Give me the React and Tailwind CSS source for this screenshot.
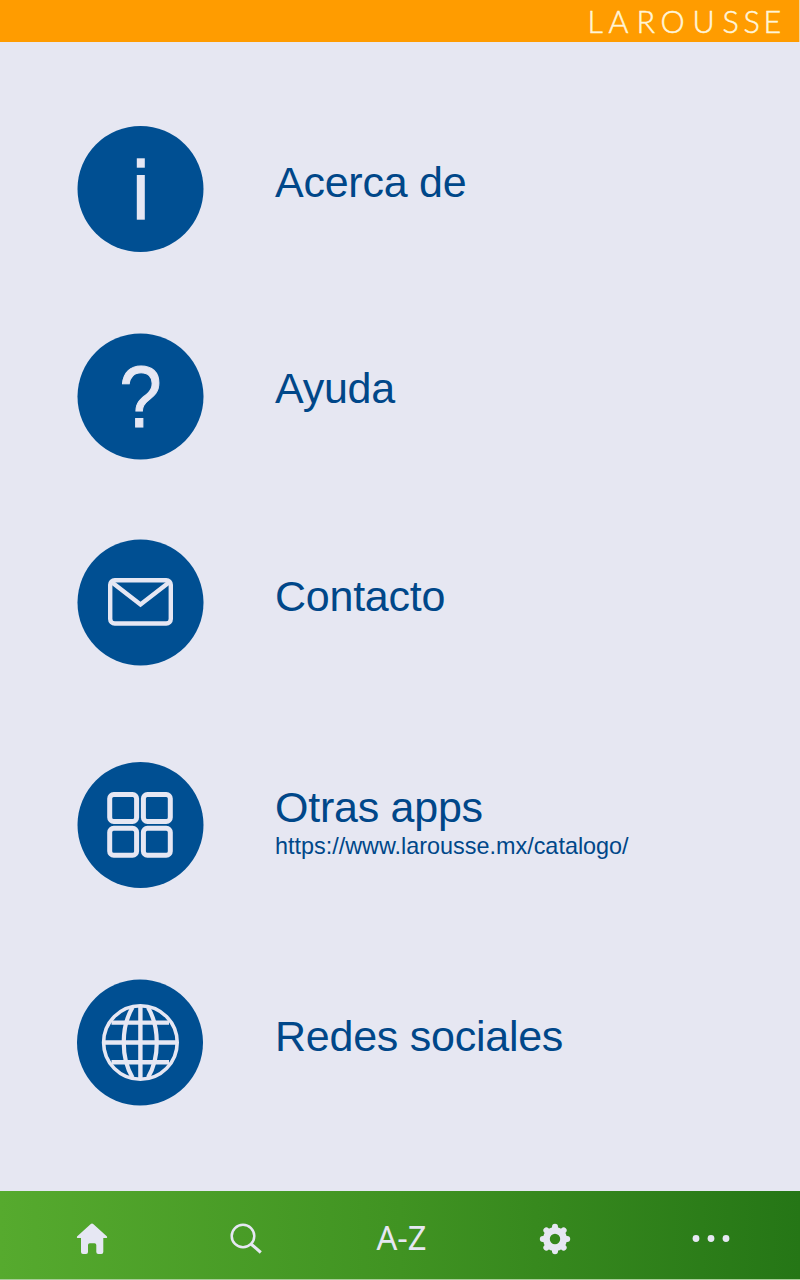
const LABEL_FONT = "font-['Liberation_Sans',Arial,sans-serif]";

function Disc({ cx = 63.5, cy = 63.5, children }) {
  return (
    <svg width="127" height="127" viewBox="0 0 127 127" className="shrink-0 text-[#e6e7f3]" fill="none" stroke="currentColor">
      <circle cx={cx} cy={cy} r="63" fill="#004f92" stroke="none" />
      {children}
    </svg>
  );
}

function InfoIcon() {
  return (
    <Disc cy={63}>
      <g fill="currentColor" stroke="none">
        <rect x="59.8" y="32.3" width="8" height="9.4" />
        <rect x="59.8" y="49" width="8" height="44.7" />
      </g>
    </Disc>
  );
}

function HelpIcon() {
  return (
    <Disc>
      <text x="63.5" y="94.3" textAnchor="middle" fontFamily="Liberation Sans, Arial, sans-serif" fontSize="86.5" textLength="42.5" lengthAdjust="spacingAndGlyphs" fill="currentColor" strokeWidth="1">?</text>
    </Disc>
  );
}

function MailIcon() {
  return (
    <Disc>
      <rect x="33.2" y="41.2" width="60.6" height="43.3" rx="4.5" strokeWidth="4.4" />
      <path d="M34.5 43 L63.5 65.5 L92.5 43" strokeWidth="4.4" />
    </Disc>
  );
}

function AppsIcon() {
  return (
    <Disc cy={63}>
      <g strokeWidth="5">
        <rect x="32.7" y="32.6" width="26.9" height="26.9" rx="4" />
        <rect x="66.4" y="32.6" width="26.9" height="26.9" rx="4" />
        <rect x="32.7" y="66.3" width="26.9" height="26.9" rx="4" />
        <rect x="66.4" y="66.3" width="26.9" height="26.9" rx="4" />
      </g>
    </Disc>
  );
}

function GlobeIcon() {
  return (
    <Disc cx={63}>
      <circle cx="63.4" cy="63.5" r="36.8" strokeWidth="3.6" />
      <path d="M63.4 27 V100 M26.5 63.5 H100 M34.5 43.6 H92 M34.5 83.2 H92" strokeWidth="4.4" />
      <path d="M55.5 28.5 C43.8 48 43.8 79 55.5 98.5 M71 28.5 C82.7 48 82.7 79 71 98.5" strokeWidth="4.2" />
    </Disc>
  );
}

const items = [
  { title: "Acerca de", Icon: InfoIcon, row: "mt-[84px]", label: "pt-[31px]" },
  { title: "Ayuda", Icon: HelpIcon, row: "mt-[80px]", label: "pt-[30px]" },
  { title: "Contacto", Icon: MailIcon, row: "mt-[79px]", label: "pt-[32px]" },
  { title: "Otras apps", Icon: AppsIcon, row: "mt-[96px]", label: "pt-[20px]", link: "https://www.larousse.mx/catalogo/" },
  { title: "Redes sociales", Icon: GlobeIcon, row: "mt-[90px]", label: "pt-[32px]" },
];

function MenuRow({ title, Icon, row, label, link }) {
  return (
    <li className={`flex h-[127px] gap-[71px] pl-[77px] ${row}`}>
      <Icon />
      <div className={`flex flex-col text-[#004789] ${label}`}>
        <span className="text-[43px] leading-[50px] tracking-[-0.25px] whitespace-nowrap">{title}</span>
        {link && <span className="text-[23.4px] leading-[28px] whitespace-nowrap">{link}</span>}
      </div>
    </li>
  );
}

function GearIcon() {
  return (
    <svg width="32" height="32" viewBox="-16 -16 32 32" fill="none" stroke="#e6e7f3">
      <circle r="8.6" strokeWidth="6.8" />
      <g strokeWidth="6" strokeLinecap="round">
        {[0, 45, 90, 135, 180, 225, 270, 315].map((a) => (
          <path key={a} d="M0 -10 V-12.2" transform={`rotate(${a})`} />
        ))}
      </g>
    </svg>
  );
}

export default function App() {
  return (
    <div className={`flex h-[1280px] w-[800px] flex-col overflow-hidden bg-[#e6e7f2] ${LABEL_FONT}`}>
      <header className="flex h-[42px] shrink-0 justify-end border-r border-[#f3d2a0] bg-[#ff9c00]">
        <svg width="219" height="42" viewBox="580 0 219 42">
          <text x="587.5 608.5 636.5 660.5 692.5 722.5 743.5 763.5" y="33" fontFamily="Lato, sans-serif" fontWeight="300" fontSize="30.5" fill="#fff5d8" stroke="#fff5d8" strokeWidth="0.5">LAROUSSE</text>
        </svg>
      </header>
      <ul className="flex flex-1 flex-col">
        {items.map((item) => (
          <MenuRow key={item.title} {...item} />
        ))}
      </ul>
      <nav className="flex h-[89px] shrink-0 items-center border-b border-[#a9cc98] bg-linear-to-r from-[#56aa2e] via-[#409322] to-[#257616] pt-[8px] pl-[76px]">
        <svg className="mr-[122px] shrink-0" width="32" height="32" viewBox="0 0 32 32" fill="#e6e7f3">
          <path d="M16 .4 Q16.7 .4 17.5 1.2 L31 13.4 Q31.5 15 30.5 15 H27.3 V29 Q27.3 31 25.3 31 H22.3 Q20.3 31 20.3 29 V22 Q20.3 20.2 18.5 20.2 H13.8 Q12 20.2 12 22 V29 Q12 31 10 31 H7 Q5 31 5 29 V15 H1.5 Q.5 15 1 13.4 L14.5 1.2 Q15.3 .4 16 .4 Z" />
        </svg>
        <svg className="mr-[112px] shrink-0" width="32" height="32" viewBox="0 0 32 32" fill="none" stroke="#e6e7f3">
          <circle cx="13" cy="13" r="11.3" strokeWidth="2.5" />
          <path d="M21 21 L30.8 29.5" strokeWidth="3" />
        </svg>
        <svg className="mr-[111px] shrink-0" width="54" height="56" viewBox="0 0 54 56">
          <text x="2.5" y="39" fontFamily="Noto Sans, sans-serif" fontSize="33" textLength="50" lengthAdjust="spacingAndGlyphs" fill="#e6e7f3">A-Z</text>
        </svg>
        <div className="mr-[121px] shrink-0">
          <GearIcon />
        </div>
        <svg className="shrink-0" width="38" height="32" viewBox="0 0 38 32" fill="#e6e7f3">
          <circle cx="4" cy="15.5" r="3.4" />
          <circle cx="19" cy="15.5" r="3.4" />
          <circle cx="34" cy="15.5" r="3.4" />
        </svg>
      </nav>
    </div>
  );
}
